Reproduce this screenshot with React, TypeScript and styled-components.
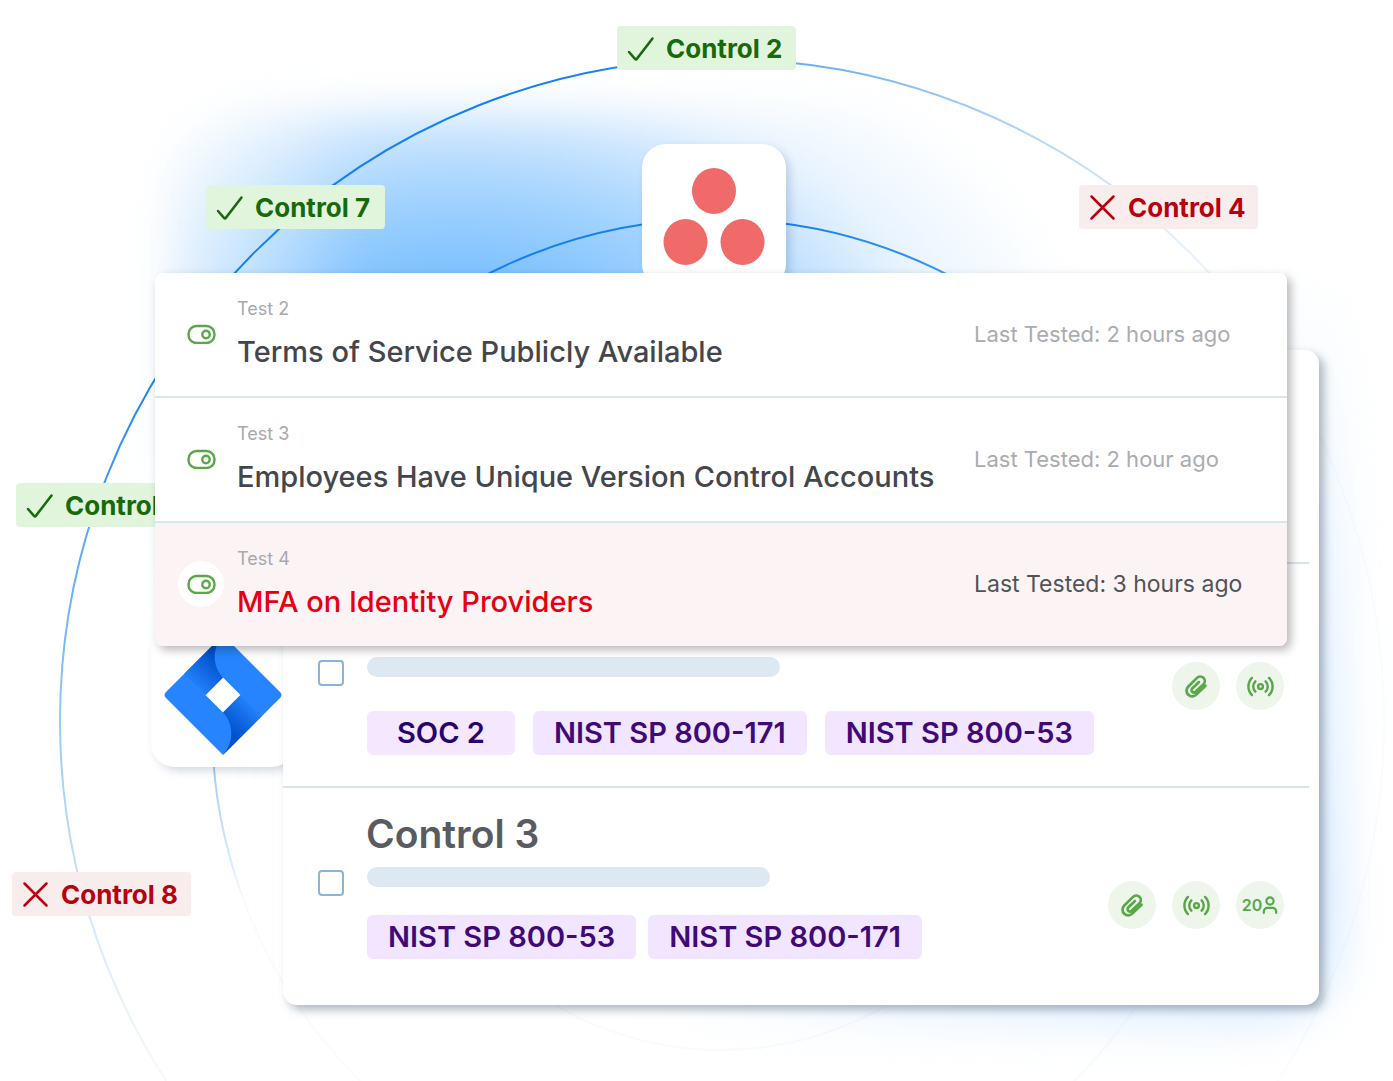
import React from "react";
import styled, { createGlobalStyle, css } from "styled-components";
import { Radio } from "lucide-react";

const GlobalStyle = createGlobalStyle`
  *, *::before, *::after { box-sizing: border-box; }
  body {
    margin: 0;
    background: #fff;
    font-family: Inter, "Liberation Sans", sans-serif;
  }
  h2, h3, p, ul { margin: 0; padding: 0; }
`;

const Stage = styled.main`
  position: relative;
  display: grid;
  align-items: start;
  min-height: 100vh;
  overflow: hidden;
`;

const Glow = styled.div`
  position: absolute;
  inset: 110px 48px 52px 168px;
  border-radius: 90px;
  background:
    linear-gradient(to right, rgba(255, 255, 255, 0.7), rgba(255, 255, 255, 0) 190px),
    radial-gradient(ellipse 620px 340px at 290px 236px, #66b5ff 0%, #80c2ff 23%, #a4d4ff 46%, #c8e4ff 62%, #e9f4ff 76%, rgba(255, 255, 255, 0) 100%),
    radial-gradient(ellipse 700px 620px at 100% 85%, #dcecff 0%, #eaf4ff 50%, rgba(255, 255, 255, 0) 100%);
  filter: blur(20px);
`;

const Orbits = styled.svg`
  position: absolute;
  top: 0;
  left: 0;
`;

type Tone = "pass" | "fail";

const Chip = styled.div<{ $tone: Tone; $x: number; $y: number }>`
  position: absolute;
  left: ${(p) => p.$x}px;
  top: ${(p) => p.$y}px;
  display: flex;
  align-items: center;
  gap: 11px;
  width: 179px;
  height: 44px;
  padding: 1px 10px 0;
  border-radius: 4px;
  font-size: 26px;
  font-weight: 700;
  line-height: 32px;
  white-space: nowrap;
  ${(p) =>
    p.$tone === "pass"
      ? css`
          background: #e1f5dc;
          color: #17690b;
        `
      : css`
          background: #f9eced;
          color: #b8000e;
        `}
`;

const Tile = styled.div<{ $x: number; $y: number }>`
  position: absolute;
  left: ${(p) => p.$x}px;
  top: ${(p) => p.$y}px;
  display: grid;
  place-items: center;
  width: 144px;
  height: 144px;
  border-radius: 24px;
  background: #fff;
  box-shadow: 4px 4px 8px rgba(40, 70, 110, 0.2);
`;

const Card = styled.section`
  position: relative;
  grid-area: 1 / 1;
  background: #fff;
`;

const ControlsCard = styled(Card)`
  margin: 350px 74px 76px 283px;
  border-radius: 14px;
  box-shadow: 5px 5px 10px rgba(50, 70, 95, 0.38);
`;

const TestsCard = styled(Card)`
  margin: 273px 106px 0 155px;
  border-radius: 8px;
  box-shadow: 4px 4px 10px rgba(0, 0, 0, 0.28);
  overflow: hidden;
`;

const TestRow = styled.article<{ $failed?: boolean }>`
  display: grid;
  grid-template-columns: 46px 1fr 313px;
  column-gap: 13px;
  align-items: center;
  padding: 23px 0 24px 23px;
  background: ${(p) => (p.$failed ? "#fcf3f4" : "#fff")};
  & + & {
    border-top: 2px solid #d9e5ef;
  }
`;

const Switch = styled.button<{ $raised?: boolean }>`
  display: grid;
  place-items: center;
  width: 46px;
  height: 46px;
  padding: 0;
  border: 0;
  border-radius: 50%;
  background: ${(p) => (p.$raised ? "#fff" : "transparent")};
  color: #58a848;
`;

const TestText = styled.div`
  display: grid;
  gap: 10px;
`;

const TestLabel = styled.p`
  font-size: 18px;
  line-height: 26px;
  color: #a7a9ae;
`;

const TestTitle = styled.h2<{ $failed?: boolean }>`
  font-size: 29px;
  font-weight: 500;
  line-height: 40px;
  white-space: nowrap;
  color: ${(p) => (p.$failed ? "#e60012" : "#43464d")};
`;

const TestedAt = styled.p<{ $failed?: boolean }>`
  font-size: ${(p) => (p.$failed ? 23 : 22)}px;
  line-height: 30px;
  white-space: nowrap;
  color: ${(p) => (p.$failed ? "#505358" : "#aaacb1")};
`;

const Spacer = styled.div`
  height: 212px;
`;

const ControlRow = styled.article<{ $top: number; $bottom: number }>`
  padding: ${(p) => p.$top}px 35px ${(p) => p.$bottom}px;
`;

const Divider = styled.hr`
  height: 2px;
  margin: 0 10px 0 0;
  border: 0;
  background: #dbe4ed;
`;

const ControlTitle = styled.h3`
  padding: 0 0 9px 48px;
  font-size: 39px;
  font-weight: 600;
  line-height: 48px;
  color: #595b63;
`;

const ControlBody = styled.div`
  display: grid;
  grid-template-columns: 26px 1fr auto;
  column-gap: 23px;
  align-items: start;
`;

const Tick = styled.input`
  appearance: none;
  width: 26px;
  height: 26px;
  margin: 3px 0 0;
  border: 2px solid #8ab4da;
  border-radius: 4px;
  background: #fff;
`;

const Details = styled.div<{ $gap: number }>`
  display: grid;
  gap: ${(p) => p.$gap}px;
`;

const Bar = styled.div<{ $width: number }>`
  width: ${(p) => p.$width}px;
  max-width: 100%;
  height: 20px;
  border-radius: 10px;
  background: #dde8f2;
`;

const Tags = styled.ul<{ $gap: number }>`
  display: flex;
  gap: ${(p) => p.$gap}px;
  list-style: none;
`;

const Tag = styled.li<{ $short?: boolean }>`
  padding: 0 ${(p) => (p.$short ? 30 : 21)}px;
  border-radius: 6px;
  background: ${(p) => (p.$short ? "#f4e7fe" : "#f1e5ff")};
  color: ${(p) => (p.$short ? "#260470" : "#3f0a75")};
  font-size: 29px;
  font-weight: 600;
  line-height: 44px;
  white-space: nowrap;
`;

const Badges = styled.div<{ $drop: number }>`
  display: flex;
  gap: 16px;
  padding-top: ${(p) => p.$drop}px;
`;

const Badge = styled.span`
  display: flex;
  align-items: center;
  justify-content: center;
  width: 48px;
  height: 48px;
  border-radius: 50%;
  background: #eef5eb;
  color: #58a848;
  font-size: 16px;
  font-weight: 600;
`;

const CheckIcon = () => (
  <svg width="28" height="28" viewBox="0 0 28 28" fill="none" stroke="currentColor" strokeWidth="2.5" strokeLinecap="round" strokeLinejoin="round">
    <path d="M2 17 8.2 24.100Q9 24.900 9.800 23.900L25.500 3.500" />
  </svg>
);

const CrossIcon = () => (
  <svg width="28" height="28" viewBox="0 0 28 28" fill="none" stroke="currentColor" strokeWidth="2.5" strokeLinecap="round">
    <path d="M2.500 2.500 24.500 24.500M24.500 2.500 2.500 24.500" />
  </svg>
);

const SwitchIcon = () => (
  <svg width="30" height="20" viewBox="0 0 30 20" fill="none" stroke="currentColor" strokeWidth="2.4">
    <rect x="2.500" y="2" width="26" height="17" rx="8" />
    <circle cx="20" cy="10.500" r="3.700" />
  </svg>
);

const ClipIcon = () => (
  <svg width="24" height="24" viewBox="0 0 24 24" fill="none" stroke="currentColor" strokeWidth="2.7" strokeLinecap="round" strokeLinejoin="round">
    <path d="M21.500 11.800 12.300 20.600A5.300 5.300 0 0 1 4.100 12.800L13 3.900A4.500 4.500 0 0 1 19.500 10.200L11.600 17.700A2.300 2.300 0 0 1 8.200 14.500L15 8.100" />
  </svg>
);

const PersonIcon = () => (
  <svg width="16" height="20" viewBox="0 0 16 20" fill="none" stroke="currentColor" strokeWidth="2.2" strokeLinecap="round">
    <circle cx="8" cy="6" r="3.600" />
    <path d="M1.800 18v-1.500a3.600 3.600 0 0 1 3.600-3.600h5.200a3.600 3.600 0 0 1 3.600 3.600V18" />
  </svg>
);

const AsanaLogo = () => (
  <svg width="102" height="98" viewBox="0 0 102 98" fill="#f06a6a">
    <ellipse cx="51" cy="24" rx="22" ry="23" />
    <ellipse cx="22.500" cy="75" rx="22" ry="23" />
    <ellipse cx="79.500" cy="75" rx="22" ry="23" />
  </svg>
);

const JiraLogo = () => (
  <svg width="118" height="120" viewBox="0 0 118 120">
    <defs>
      <linearGradient id="foldTop" gradientUnits="userSpaceOnUse" x1="54" y1="20" x2="25" y2="49">
        <stop offset="0.1" stopColor="#0052cc" />
        <stop offset="1" stopColor="#2684ff" />
      </linearGradient>
      <linearGradient id="foldBottom" gradientUnits="userSpaceOnUse" x1="64" y1="100" x2="93" y2="71">
        <stop offset="0.1" stopColor="#0052cc" />
        <stop offset="1" stopColor="#2684ff" />
      </linearGradient>
    </defs>
    <path fill="#2684ff" d="M59 0 116 57Q119 60 116 63L59 120 2 63Q-1 60 2 57ZM59 42.500 41.500 60 59 77.500 76.500 60Z" fillRule="evenodd" />
    <path fill="url(#foldTop)" d="M59 42.500C48 31 48 13 59 0L20 39 41.500 60Z" />
    <path fill="url(#foldBottom)" d="M59 77.500C70 89 70 107 59 120L98 81 76.500 60Z" />
  </svg>
);

const tests = [
  { label: "Test 2", title: "Terms of Service Publicly Available", tested: "Last Tested: 2 hours ago", failed: false },
  { label: "Test 3", title: "Employees Have Unique Version Control Accounts", tested: "Last Tested: 2 hour ago", failed: false },
  { label: "Test 4", title: "MFA on Identity Providers", tested: "Last Tested: 3 hours ago", failed: true },
];

const chips: { text: string; tone: Tone; x: number; y: number }[] = [
  { text: "Control 2", tone: "pass", x: 617, y: 26 },
  { text: "Control 7", tone: "pass", x: 206, y: 185 },
  { text: "Control 4", tone: "fail", x: 1079, y: 185 },
  { text: "Control", tone: "pass", x: 16, y: 483 },
  { text: "Control 8", tone: "fail", x: 12, y: 872 },
];

export default function App() {
  return (
    <>
      <GlobalStyle />
      <Stage>
        <Glow />
        <Orbits width="1442" height="1442" viewBox="0 0 1442 1442" fill="none" strokeWidth="2" aria-hidden="true">
          <defs>
            <linearGradient id="outer" gradientUnits="userSpaceOnUse" x1="225" y1="322" x2="583" y2="832">
              <stop offset="0" stopColor="#1381f0" />
              <stop offset="0.16" stopColor="#3d9bf3" stopOpacity="0.85" />
              <stop offset="0.4" stopColor="#3d9bf3" stopOpacity="0.5" />
              <stop offset="0.7" stopColor="#3d9bf3" stopOpacity="0.2" />
              <stop offset="1" stopColor="#8aa5c0" stopOpacity="0.04" />
            </linearGradient>
            <linearGradient id="inner" gradientUnits="userSpaceOnUse" x1="186" y1="466" x2="345" y2="862">
              <stop offset="0" stopColor="#1381f0" />
              <stop offset="0.25" stopColor="#2a8ff0" stopOpacity="0.9" />
              <stop offset="0.68" stopColor="#3d9bf3" stopOpacity="0.5" />
              <stop offset="0.9" stopColor="#3d9bf3" stopOpacity="0.2" />
              <stop offset="1" stopColor="#8aa5c0" stopOpacity="0.05" />
            </linearGradient>
          </defs>
          <circle cx="722" cy="721" r="662" stroke="url(#outer)" />
          <circle cx="717" cy="724" r="505" stroke="url(#inner)" />
          <circle cx="721" cy="721" r="329" stroke="#8aa5c0" strokeOpacity="0.05" />
        </Orbits>

        {chips.map((c) => (
          <Chip key={c.text} $tone={c.tone} $x={c.x} $y={c.y}>
            {c.tone === "pass" ? <CheckIcon /> : <CrossIcon />}
            {c.text}
          </Chip>
        ))}

        <Tile $x={642} $y={144}>
          <AsanaLogo />
        </Tile>
        <Tile $x={151} $y={623}>
          <JiraLogo />
        </Tile>

        <ControlsCard>
          <Spacer />
          <Divider />
          <ControlRow $top={93} $bottom={31}>
            <ControlBody>
              <Tick type="checkbox" aria-label="Select control" />
              <Details $gap={34}>
                <Bar $width={413} />
                <Tags $gap={18}>
                  <Tag $short>SOC 2</Tag>
                  <Tag>NIST SP 800-171</Tag>
                  <Tag>NIST SP 800-53</Tag>
                </Tags>
              </Details>
              <Badges $drop={5}>
                <Badge><ClipIcon /></Badge>
                <Badge><Radio size={29} strokeWidth={2} /></Badge>
              </Badges>
            </ControlBody>
          </ControlRow>
          <Divider />
          <ControlRow $top={22} $bottom={46}>
            <ControlTitle>Control 3</ControlTitle>
            <ControlBody>
              <Tick type="checkbox" aria-label="Select Control 3" />
              <Details $gap={28}>
                <Bar $width={403} />
                <Tags $gap={12}>
                  <Tag>NIST SP 800-53</Tag>
                  <Tag>NIST SP 800-171</Tag>
                </Tags>
              </Details>
              <Badges $drop={14}>
                <Badge><ClipIcon /></Badge>
                <Badge><Radio size={29} strokeWidth={2} /></Badge>
                <Badge>20<PersonIcon /></Badge>
              </Badges>
            </ControlBody>
          </ControlRow>
        </ControlsCard>

        <TestsCard>
          {tests.map((t) => (
            <TestRow key={t.label} $failed={t.failed}>
              <Switch type="button" role="switch" aria-checked="true" aria-label={t.label} $raised={t.failed}>
                <SwitchIcon />
              </Switch>
              <TestText>
                <TestLabel>{t.label}</TestLabel>
                <TestTitle $failed={t.failed}>{t.title}</TestTitle>
              </TestText>
              <TestedAt $failed={t.failed}>{t.tested}</TestedAt>
            </TestRow>
          ))}
        </TestsCard>
      </Stage>
    </>
  );
}
